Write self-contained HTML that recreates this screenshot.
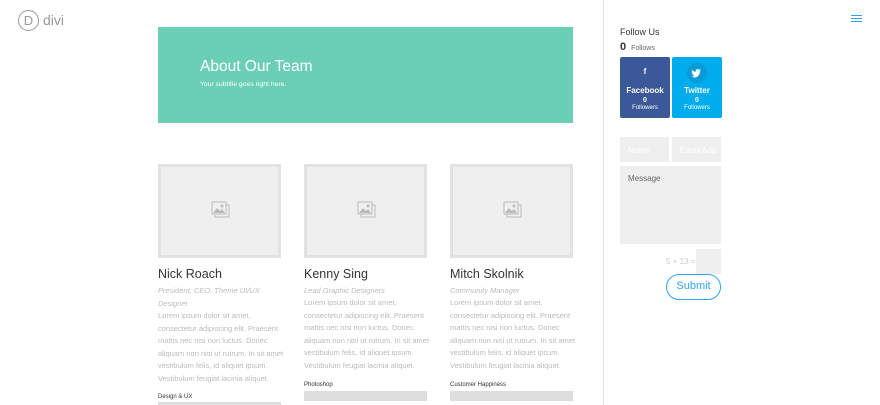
<!DOCTYPE html>
<html><head><meta charset="utf-8"><style>
*{margin:0;padding:0;box-sizing:border-box}
html,body{width:880px;height:405px;overflow:hidden}
body{background:#fff;font-family:"Liberation Sans",sans-serif;position:relative}
.a{position:absolute}
.img{width:123px;height:94px;background:#efefef;border:3px solid #e2e2e2;top:164px}
.img svg{position:absolute;left:50px;top:34px}
.name{font-size:12.5px;color:#333;top:267px}
.role{font-size:7.5px;color:#bbb;font-style:italic;line-height:12.5px;width:126px}
.txt{font-size:7.5px;color:#bbb;line-height:12.5px;width:126px}
.sk{font-size:6px;color:#333}
.bar{height:10px;background:#ddd;width:123px}
.in{background:#efefef;font-size:8px;color:#fff;padding:9px 8px;white-space:nowrap;overflow:hidden}
.cnt{color:#fff;text-align:center;border-radius:2px}
</style></head><body>
<div class="a" style="left:18px;top:10px;width:21px;height:21px;border:1px solid #999;border-radius:50%;font-size:13px;color:#999;text-align:center;line-height:19px">D</div>
<div class="a" style="left:43px;top:12px;font-size:14px;color:#999">divi</div>
<div class="a" style="left:158px;top:27px;width:415px;height:96px;background:#6acfb5"></div>
<div class="a" style="left:200px;top:58px;font-size:15.5px;color:#fff">About Our Team</div>
<div class="a" style="left:200px;top:81px;font-size:6.8px;color:#fff">Your subtitle goes right here.</div>

<div class="a img" style="left:158px"><svg width="20" height="20" viewBox="0 0 20 20"><rect x="4" y="4" width="14" height="12" fill="none" stroke="#bbb"/><rect x="1" y="1" width="14" height="12" fill="#efefef" stroke="#bbb"/><path d="M2 12l4-5 3 3 2-2 3 4z" fill="#bbb"/><circle cx="11" cy="5" r="1.5" fill="#bbb"/></svg></div>
<div class="a img" style="left:304px"><svg width="20" height="20" viewBox="0 0 20 20"><rect x="4" y="4" width="14" height="12" fill="none" stroke="#bbb"/><rect x="1" y="1" width="14" height="12" fill="#efefef" stroke="#bbb"/><path d="M2 12l4-5 3 3 2-2 3 4z" fill="#bbb"/><circle cx="11" cy="5" r="1.5" fill="#bbb"/></svg></div>
<div class="a img" style="left:450px"><svg width="20" height="20" viewBox="0 0 20 20"><rect x="4" y="4" width="14" height="12" fill="none" stroke="#bbb"/><rect x="1" y="1" width="14" height="12" fill="#efefef" stroke="#bbb"/><path d="M2 12l4-5 3 3 2-2 3 4z" fill="#bbb"/><circle cx="11" cy="5" r="1.5" fill="#bbb"/></svg></div>

<div class="a name" style="left:158px">Nick Roach</div>
<div class="a role" style="left:158px;top:285px">President, CEO, Theme UI/UX Designer</div>
<div class="a txt" style="left:158px;top:310px">Lorem ipsum dolor sit amet, consectetur adipiscing elit. Praesent mattis nec nisi non luctus. Donec aliquam non nisi ut rutrum. In sit amet vestibulum felis, id aliquet ipsum. Vestibulum feugiat lacinia aliquet.</div>
<div class="a sk" style="left:158px;top:394px">Design &amp; UX</div>
<div class="a bar" style="left:158px;top:402px;height:3px"></div>

<div class="a name" style="left:304px">Kenny Sing</div>
<div class="a role" style="left:304px;top:285px">Lead Graphic Designers</div>
<div class="a txt" style="left:304px;top:297px">Lorem ipsum dolor sit amet, consectetur adipiscing elit. Praesent mattis nec nisi non luctus. Donec aliquam non nisi ut rutrum. In sit amet vestibulum felis, id aliquet ipsum. Vestibulum feugiat lacinia aliquet.</div>
<div class="a sk" style="left:304px;top:382px">Photoshop</div>
<div class="a bar" style="left:304px;top:391px"></div>

<div class="a name" style="left:450px">Mitch Skolnik</div>
<div class="a role" style="left:450px;top:285px">Community Manager</div>
<div class="a txt" style="left:450px;top:297px">Lorem ipsum dolor sit amet, consectetur adipiscing elit. Praesent mattis nec nisi non luctus. Donec aliquam non nisi ut rutrum. In sit amet vestibulum felis, id aliquet ipsum. Vestibulum feugiat lacinia aliquet.</div>
<div class="a sk" style="left:450px;top:382px">Customer Happiness</div>
<div class="a bar" style="left:450px;top:391px"></div>

<div class="a" style="left:603px;top:0;width:1px;height:405px;background:#e5e5e5"></div>
<div class="a" style="left:851px;top:15px;width:11px;height:1px;background:#2ea3f2;box-shadow:0 3px 0 #2ea3f2,0 6px 0 #2ea3f2"></div>
<div class="a" style="left:620px;top:27px;font-size:9px;color:#333">Follow Us</div>
<div class="a" style="left:620px;top:41px;font-size:11px;color:#333;font-weight:bold">0 <span style="font-size:7px;font-weight:normal;color:#666">&nbsp;Follows</span></div>
<div class="a cnt" style="left:620px;top:57px;width:50px;height:61px;background:#3b5998">
<div class="a" style="left:0;width:50px;top:10px;font-size:8px;font-weight:bold">f</div>
<div class="a" style="left:0;width:50px;top:29px;font-size:8px;font-weight:bold">Facebook</div>
<div class="a" style="left:0;width:50px;top:40px;font-size:7px;font-weight:bold">0</div>
<div class="a" style="left:0;width:50px;top:48px;font-size:6px">Followers</div></div>
<div class="a cnt" style="left:672px;top:57px;width:50px;height:61px;background:#00aced">
<div class="a" style="left:15px;top:6px;width:20px;height:20px;border-radius:50%;background:#0a9ad6"><svg width="20" height="20" viewBox="0 0 20 20"><path d="M14 7.2c-.4.2-.8.3-1.2.3.4-.3.8-.7.9-1.1-.4.2-.9.4-1.3.5a2 2 0 0 0-3.5 1.9C7.2 8.7 5.9 8 4.9 6.9c-.5 1 0 2 .7 2.6-.3 0-.6-.1-.9-.2 0 1 .7 1.8 1.6 2-.3.1-.6.1-.9 0 .3.8 1 1.4 1.9 1.4-.8.6-1.9 1-3 .9 3.9 2.3 8.5-.3 8.5-4.9v-.2c.5-.3.9-.7 1.2-1.3z" fill="#fff"/></svg></div>
<div class="a" style="left:0;width:50px;top:29px;font-size:8px;font-weight:bold">Twitter</div>
<div class="a" style="left:0;width:50px;top:40px;font-size:7px;font-weight:bold">0</div>
<div class="a" style="left:0;width:50px;top:48px;font-size:6px">Followers</div></div>

<div class="a in" style="left:620px;top:137px;width:49px;height:25px">Name</div>
<div class="a in" style="left:672px;top:137px;width:49px;height:25px">Email Add</div>
<div class="a in" style="left:620px;top:166px;width:101px;height:78px;color:#666;padding:8px">Message</div>
<div class="a" style="left:666px;top:257px;font-size:8px;color:#ccc">5 + 13 =</div>
<div class="a" style="left:696px;top:249px;width:25px;height:25px;background:#efefef"></div>
<div class="a" style="left:666px;top:274px;width:55px;height:26px;border:1.5px solid #2ea3f2;border-radius:14px;color:#2ea3f2;font-size:11px;text-align:center;line-height:23px">Submit</div>
</body></html>
